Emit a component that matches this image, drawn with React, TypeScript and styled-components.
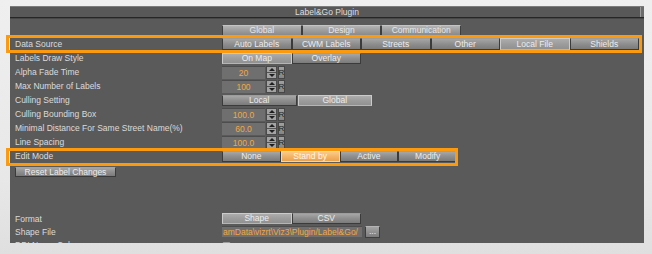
import React from "react";
import styled, { createGlobalStyle, css } from "styled-components";

const GlobalStyle = createGlobalStyle`
  html, body { margin: 0; padding: 0; }
  body {
    width: 652px;
    height: 254px;
    overflow: hidden;
    background: linear-gradient(180deg, #efefef 0%, #e8e8e8 70%, #dfdfdf 100%);
    font-family: "Liberation Sans", Arial, sans-serif;
  }
`;

const ORANGE = "#fb9a0e";
const FS = "8.5px";

const Page = styled.div`
  width: 652px;
  height: 254px;
  box-sizing: border-box;
  padding: 6px 8px 11px 10px;
`;

const Panel = styled.div`
  width: 634px;
  height: 237px;
  background: #5a5a5a;
  display: flex;
  flex-direction: column;
`;

const TitleBar = styled.div`
  height: 10px;
  flex-shrink: 0;
  border-top: 1px solid #7c7c7c;
  border-bottom: 1px solid #262626;
  box-shadow: 0 1px 0 #474747;
  background: #585858;
  display: flex;
  align-items: center;
  justify-content: center;
  position: relative;
  font-size: ${FS};
  color: #dedede;
  line-height: 10px;
`;

const TitleEdge = styled.div`
  position: absolute;
  right: 0;
  top: 0;
  width: 3px;
  height: 10px;
  background: #6c6c6c;
  border-left: 1px solid #9a9a9a;
`;

const Body = styled.div`
  flex: 1;
  min-height: 0;
  display: flex;
  flex-direction: column;
  clip-path: inset(0 -12px 0 -12px);
`;

const Row = styled.div<{ $h?: number; $mt?: number }>`
  position: relative;
  height: ${(p) => p.$h ?? 14}px;
  margin-top: ${(p) => p.$mt ?? 0}px;
  display: flex;
  align-items: center;
  padding-left: 5px;
  flex-shrink: 0;
`;

const Highlight = styled.div<{ $top: number; $bottom: number; $left: number; $width?: number; $right?: number }>`
  position: absolute;
  top: ${(p) => p.$top}px;
  bottom: ${(p) => p.$bottom}px;
  left: ${(p) => p.$left}px;
  ${(p) => (p.$width != null ? `width: ${p.$width}px;` : `right: ${p.$right ?? 0}px;`)}
  box-sizing: border-box;
  border: 3px solid ${ORANGE};
  pointer-events: none;
`;

const Label = styled.div`
  width: 207px;
  flex-shrink: 0;
  font-size: ${FS};
  color: #dadada;
  white-space: nowrap;
  line-height: 14px;
`;

const Group = styled.div<{ $w: number; $gap?: number }>`
  display: flex;
  width: ${(p) => p.$w}px;
  gap: ${(p) => p.$gap ?? 0}px;
`;

type Variant = "normal" | "selected" | "active" | "tab";

const Btn = styled.div<{ $v?: Variant; $h?: number }>`
  flex: 1;
  height: ${(p) => p.$h ?? 11}px;
  box-sizing: border-box;
  font-size: ${FS};
  line-height: ${(p) => (p.$h ?? 11) - 2}px;
  text-align: center;
  white-space: nowrap;
  overflow: hidden;
  color: #ececec;
  ${(p) => {
    switch (p.$v) {
      case "selected":
        return css`
          background: linear-gradient(180deg, #acacac 0%, #9b9b9b 55%, #919191 100%);
          border: 1px solid #cbcbcb;
          border-bottom-color: #b5b5b5;
        `;
      case "active":
        return css`
          background: linear-gradient(180deg, #fbcb86 0%, #f3b265 55%, #eaa24c 100%);
          border: 1px solid #f7d7a6;
          color: #fff6e8;
        `;
      case "tab":
        return css`
          background: linear-gradient(180deg, #b3b3b3 0%, #9b9b9b 55%, #8a8a8a 100%);
          border: 1px solid #3e3e3e;
          border-top-color: #c4c4c4;
          color: #e6e6e6;
        `;
      default:
        return css`
          background: linear-gradient(180deg, #a6a6a6 0%, #8e8e8e 50%, #7b7b7b 100%);
          border: 1px solid #3b3b3b;
          border-top-color: #9d9d9d;
        `;
    }
  }}
`;

const NumWrap = styled.div`
  display: flex;
  gap: 1px;
  align-items: stretch;
  height: 13px;
`;

const NumField = styled.div`
  width: 43px;
  box-sizing: border-box;
  background: #6f6f6f;
  border-top: 1px solid #4d4d4d;
  color: #f0a846;
  font-size: ${FS};
  line-height: 12px;
  text-align: center;
`;

const Spinner = styled.div`
  width: 11px;
  display: flex;
  flex-direction: column;
  background: #a3a3a3;
  border: 1px solid #4a4a4a;
  box-sizing: border-box;
`;

const SpinHalf = styled.div<{ $down?: boolean }>`
  flex: 1;
  display: flex;
  align-items: center;
  justify-content: center;
  ${(p) => (p.$down ? "border-top: 1px solid #555;" : "")}
  &::before {
    content: "";
    width: 0;
    height: 0;
    border-left: 3px solid transparent;
    border-right: 3px solid transparent;
    ${(p) => (p.$down ? "border-top: 3px solid #1e1e1e;" : "border-bottom: 3px solid #1e1e1e;")}
  }
`;

const RBtn = styled.div`
  width: 7px;
  box-sizing: border-box;
  background: linear-gradient(180deg, #a0a0a0, #858585);
  border: 1px solid #474747;
  color: #1a1a1a;
  font-size: 8px;
  line-height: 11px;
  display: flex;
  justify-content: center;
  overflow: visible;
`;

const PathField = styled.div`
  width: 140px;
  height: 11px;
  box-sizing: border-box;
  background: #6f6f6f;
  border-top: 1px solid #4d4d4d;
  color: #f0a846;
  font-size: ${FS};
  line-height: 10px;
  white-space: nowrap;
  overflow: hidden;
  padding-left: 1px;
`;

const DotsBtn = styled.div`
  margin-left: 3px;
  width: 15px;
  height: 12px;
  box-sizing: border-box;
  background: linear-gradient(180deg, #a4a4a4, #7c7c7c);
  border: 1px solid #3e3e3e;
  border-top-color: #b4b4b4;
  color: #eeeeee;
  font-size: ${FS};
  line-height: 9px;
  text-align: center;
`;

const Swatch = styled.div`
  width: 9px;
  height: 9px;
  margin-top: 4px;
  box-sizing: border-box;
  border-radius: 2px;
  background: #8a8a8a;
  border: 1px solid #9f9f9f;
`;

const ResetBtn = styled.div`
  width: 101px;
  height: 10px;
  box-sizing: border-box;
  background: linear-gradient(180deg, #a6a6a6 0%, #8e8e8e 50%, #7b7b7b 100%);
  border: 1px solid #3b3b3b;
  border-top-color: #a3a3a3;
  color: #ececec;
  font-size: ${FS};
  line-height: 8px;
  text-align: center;
  white-space: nowrap;
`;

const NumberInput: React.FC<{ value: string }> = ({ value }) => (
  <NumWrap>
    <NumField>{value}</NumField>
    <Spinner>
      <SpinHalf />
      <SpinHalf $down />
    </Spinner>
    <RBtn>R</RBtn>
  </NumWrap>
);

const dataSources = ["Auto Labels", "CWM Labels", "Streets", "Other", "Local File", "Shields"];
const editModes = ["None", "Stand by", "Active", "Modify"];

export default function App() {
  return (
    <>
      <GlobalStyle />
      <Page>
        <Panel>
          <TitleBar>
            Label&amp;Go Plugin
            <TitleEdge />
          </TitleBar>
          <Body>
            <Row $h={12} $mt={6}>
              <Label />
              <Group $w={239}>
                <Btn $v="tab">Global</Btn>
                <Btn $v="tab">Design</Btn>
                <Btn $v="tab">Communication</Btn>
              </Group>
            </Row>
            <Row $mt={1}>
              <Highlight $top={-2} $bottom={-2} $left={-4} $right={2} />
              <Label>Data Source</Label>
              <Group $w={417}>
                {dataSources.map((d) => (
                  <Btn key={d} $h={12} $v={d === "Local File" ? "selected" : "normal"}>
                    {d}
                  </Btn>
                ))}
              </Group>
            </Row>
            <Row>
              <Label>Labels Draw Style</Label>
              <Group $w={139}>
                <Btn $v="selected">On Map</Btn>
                <Btn>Overlay</Btn>
              </Group>
            </Row>
            <Row>
              <Label>Alpha Fade Time</Label>
              <NumberInput value="20" />
            </Row>
            <Row>
              <Label>Max Number of Labels</Label>
              <NumberInput value="100" />
            </Row>
            <Row>
              <Label>Culling Setting</Label>
              <Group $w={150} $gap={1}>
                <Btn>Local</Btn>
                <Btn $v="selected">Global</Btn>
              </Group>
            </Row>
            <Row>
              <Label>Culling Bounding Box</Label>
              <NumberInput value="100.0" />
            </Row>
            <Row>
              <Label>Minimal Distance For Same Street Name(%)</Label>
              <NumberInput value="60.0" />
            </Row>
            <Row>
              <Label>Line Spacing</Label>
              <NumberInput value="100.0" />
            </Row>
            <Row>
              <Highlight $top={-1} $bottom={-3} $left={-4} $width={452} />
              <Label>Edit Mode</Label>
              <Group $w={235}>
                {editModes.map((m) => (
                  <Btn key={m} $v={m === "Stand by" ? "active" : "normal"}>
                    {m}
                  </Btn>
                ))}
              </Group>
            </Row>
            <Row $h={10} $mt={4}>
              <ResetBtn>Reset Label Changes</ResetBtn>
            </Row>
            <Row $h={13} $mt={35}>
              <Label>Format</Label>
              <Group $w={139}>
                <Btn $v="selected">Shape</Btn>
                <Btn>CSV</Btn>
              </Group>
            </Row>
            <Row $h={13}>
              <Label>Shape File</Label>
              <PathField>amData\vizrt\Viz3\Plugin/Label&amp;Go/</PathField>
              <DotsBtn>...</DotsBtn>
            </Row>
            <Row $h={13}>
              <Label>DDI Name Column</Label>
              <Swatch />
            </Row>
          </Body>
        </Panel>
      </Page>
    </>
  );
}
